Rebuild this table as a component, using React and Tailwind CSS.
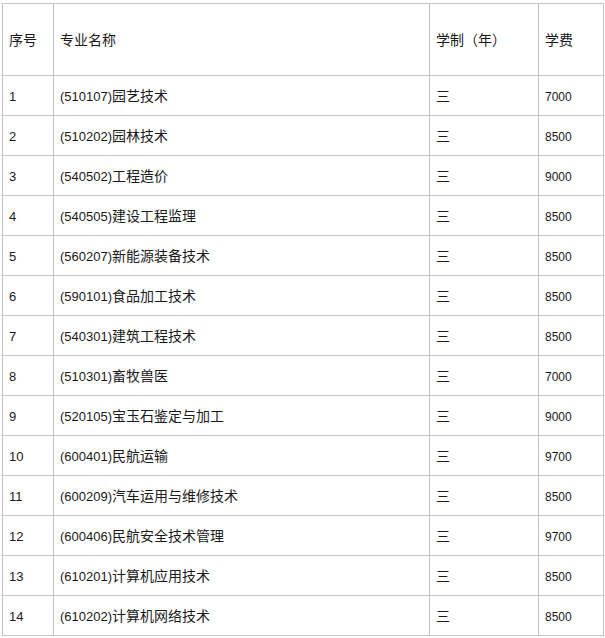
import React from 'react';

const rows = [
  ['1', '510107', '园艺技术', '7000'],
  ['2', '510202', '园林技术', '8500'],
  ['3', '540502', '工程造价', '9000'],
  ['4', '540505', '建设工程监理', '8500'],
  ['5', '560207', '新能源装备技术', '8500'],
  ['6', '590101', '食品加工技术', '8500'],
  ['7', '540301', '建筑工程技术', '8500'],
  ['8', '510301', '畜牧兽医', '7000'],
  ['9', '520105', '宝玉石鉴定与加工', '9000'],
  ['10', '600401', '民航运输', '9700'],
  ['11', '600209', '汽车运用与维修技术', '8500'],
  ['12', '600406', '民航安全技术管理', '9700'],
  ['13', '610201', '计算机应用技术', '8500'],
  ['14', '610202', '计算机网络技术', '8500'],
];

const cell = 'border border-[#c4c4c4] px-[6px] text-left align-middle font-normal';
const num = "text-[13px] font-['Liberation_Sans',sans-serif]";

export default function App() {
  return (
    <div className="bg-white w-[605px] h-[638px] pl-[2px] pt-[3px] text-[#1a1a1a] font-['Noto_Sans_CJK_SC','Liberation_Sans',sans-serif] text-[14px]">
      <table className="table-fixed border-collapse w-[601px]">
        <colgroup>
          <col className="w-[51px]" />
          <col className="w-[376px]" />
          <col className="w-[109px]" />
          <col className="w-[65px]" />
        </colgroup>
        <thead>
          <tr className="h-[72px]">
            <th className={cell}>序号</th>
            <th className={cell}>专业名称</th>
            <th className={cell}>学制（年）</th>
            <th className={cell}>学费</th>
          </tr>
        </thead>
        <tbody>
          {rows.map(([n, code, name, fee]) => (
            <tr key={n} className="h-[40px]">
              <td className={cell}><span className={num}>{n}</span></td>
              <td className={cell}>
                <span className={num}>({code})</span>{name}
              </td>
              <td className={cell}>三</td>
              <td className={cell}><span className="text-[12px] font-['Liberation_Sans',sans-serif]">{fee}</span></td>
            </tr>
          ))}
        </tbody>
      </table>
    </div>
  );
}
